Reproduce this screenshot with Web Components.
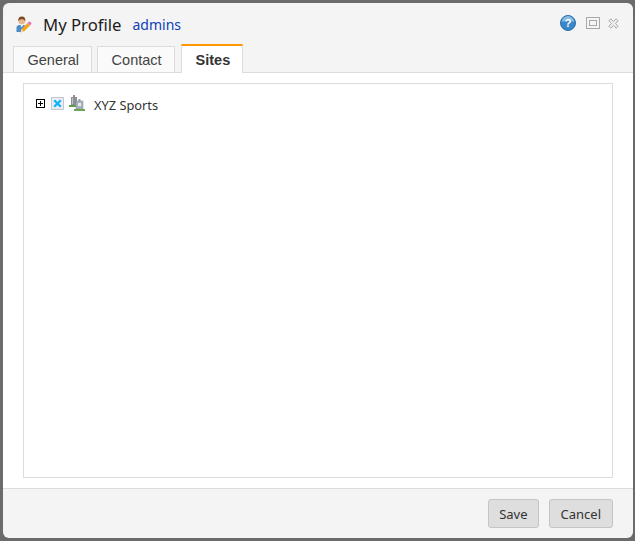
<!DOCTYPE html>
<html>
<head>
<meta charset="utf-8">
<title>My Profile</title>
<style>
  html, body { margin: 0; height: 100%; }
  body { background: #6b6b6b; overflow: hidden; font-family: "Noto Sans", "Open Sans", sans-serif; }
</style>
</head>
<body>
<profile-dialog>
  <span slot="title">My Profile</span>
  <span slot="user">admins</span>
  <tab-button>General</tab-button>
  <tab-button>Contact</tab-button>
  <tab-button active>Sites</tab-button>
  <site-tree slot="body" label="XYZ Sports"></site-tree>
  <dialog-button slot="footer">Save</dialog-button>
  <dialog-button slot="footer">Cancel</dialog-button>
</profile-dialog>

<script>
class ProfileDialog extends HTMLElement {
  constructor() {
    super();
    this.attachShadow({ mode: "open" });
  }

  connectedCallback() {
    this.shadowRoot.innerHTML = `
      <style>
        :host {
          display: flex;
          flex-direction: column;
          box-sizing: border-box;
          width: 630px;
          height: 535px;
          margin: 3px 0 0 3px;
          background: #f4f4f4;
          border-radius: 6px;
          overflow: hidden;
          color: #222;
        }

        #header {
          height: 70px;
          box-sizing: border-box;
          flex: none;
          position: relative;
          border-bottom: 1px solid #dcdcdc;
        }

        #title {
          display: flex;
          align-items: center;
          height: 43px;
          padding-left: 13px;
        }

        #title svg { flex: none; margin-right: 11px; }

        #name { font-size: 16.700px; color: #1c1c1c; }
        #user { font-size: 14px; color: #0c3fb8; margin-left: 11px; }

        #tools {
          position: absolute;
          top: 12px;
          right: 14px;
          display: flex;
          align-items: center;
        }

        #tools svg:nth-child(2) { margin: 0 8px 0 10px; }

        #tabs {
          display: flex;
          gap: 5px;
          padding-left: 10px;
        }

        #main {
          flex: 1;
          background: #fff;
          padding: 10px 20px 10px 20px;
          display: flex;
          min-height: 0;
        }

        #panel {
          flex: 1;
          border: 1px solid #dcdcdc;
          background: #fff;
        }

        #footer {
          flex: none;
          height: 50px;
          box-sizing: border-box;
          border-top: 1px solid #dcdcdc;
          display: flex;
          justify-content: flex-end;
          align-items: flex-start;
          gap: 10px;
          padding: 10px 20px 0 0;
        }
      </style>

      <div id="header">
        <div id="title">
          <svg width="16" height="17" viewBox="0 0 16 17">
            <path d="M0.500 16 V11.500 Q0.500 9.500 3.500 9 H8 Q9.500 9.500 10.500 10.500 L6 16 Z" fill="#4a8cc8"/>
            <path d="M4.500 9 L5.800 11.500 L7 9 Z" fill="#fff"/>
            <circle cx="5.800" cy="5" r="3.300" fill="#e9b68e"/>
            <path d="M2.300 5.500 Q1.800 0.500 5.800 0.500 Q9.800 0.500 9.300 5.500 Q8.500 3 5.800 3.200 Q3.200 3 2.300 5.500 Z" fill="#7a4a22"/>
            <path d="M4.500 16.500 L5.500 13 L11.500 7 L14 9.500 L8 15.500 Z" fill="#f0a71f"/>
            <path d="M11.500 7 L12.800 5.700 Q13.500 5.200 14.800 6.300 Q15.800 7.300 15.300 8 L14 9.500 Z" fill="#e672b4"/>
            <path d="M4.500 16.500 L5.500 13 L8 15.500 Z" fill="#f3d9b5"/>
          </svg>
          <span id="name"><slot name="title"></slot></span>
          <span id="user"><slot name="user"></slot></span>
        </div>
        <div id="tools">
          <svg width="16" height="16" viewBox="0 0 16 16">
            <circle cx="8" cy="8" r="7.500" fill="#3a86c6" stroke="#2a70ad" stroke-width="1"/>
            <path d="M2 7 A6 6 0 0 1 14 7 Q8 4.500 2 7 Z" fill="#8abde3"/>
            <text x="8" y="12" text-anchor="middle" font-family="Liberation Sans" font-weight="700" font-size="11" fill="#fff">?</text>
          </svg>
          <svg width="14" height="12" viewBox="0 0 14 12">
            <rect x="0.500" y="0.500" width="13" height="11" fill="#f4f4f4" stroke="#a8a8a8"/>
            <rect x="3.500" y="3.500" width="7" height="5" fill="#f4f4f4" stroke="#a8a8a8"/>
          </svg>
          <svg width="11" height="11" viewBox="0 0 11 11">
            <path d="M0.800 2.800 L2.800 0.800 L5.500 3.500 L8.200 0.800 L10.200 2.800 L7.500 5.500 L10.200 8.200 L8.200 10.200 L5.500 7.500 L2.800 10.200 L0.800 8.200 L3.500 5.500 Z" fill="#ececec" stroke="#a8a8a8" stroke-width="1"/>
          </svg>
        </div>
        <div id="tabs"><slot></slot></div>
      </div>

      <div id="main">
        <div id="panel"><slot name="body"></slot></div>
      </div>

      <div id="footer"><slot name="footer"></slot></div>
    `;
  }
}

class TabButton extends HTMLElement {
  constructor() {
    super();
    this.attachShadow({ mode: "open" });
  }

  connectedCallback() {
    this.shadowRoot.innerHTML = `
      <style>
        :host {
          display: block;
          box-sizing: border-box;
          height: 26px;
          padding: 0 12px 0 13.500px;
          border: 1px solid #dcdcdc;
          border-bottom: none;
          background: #fafafa;
          font: 14.500px/27px "Liberation Sans", Arial, sans-serif;
          color: #444;
        }

        :host([active]) {
          height: 29px;
          margin: -2px 0 -1px 1px;
          padding: 0 12px 0 14px;
          border-top: 2px solid #f90;
          background: #fff;
          font-weight: 700;
          line-height: 28px;
          color: #333;
        }
      </style>
      <slot></slot>
    `;
  }
}

class SiteTree extends HTMLElement {
  constructor() {
    super();
    this.attachShadow({ mode: "open" });
  }

  connectedCallback() {
    this.shadowRoot.innerHTML = `
      <style>
        :host {
          display: flex;
          align-items: center;
          height: 20px;
          margin: 10px 0 0 12px;
          font-size: 12.800px;
          color: #333;
        }

        svg { flex: none; }
        #expand { margin-top: -1px; }
        #check { margin: -2px 0 0 6px; }
        #site { margin: -2px 0 0 5px; }
        #label { margin: 2px 0 0 9px; }
      </style>
      <svg id="expand" width="9" height="9" viewBox="0 0 9 9">
        <rect x="0.500" y="0.500" width="8" height="8" fill="#fff" stroke="#000"/>
        <path d="M2 4.500 H7 M4.500 2 V7" stroke="#000"/>
      </svg>
      <svg id="check" width="13" height="13" viewBox="0 0 13 13">
        <rect x="0.500" y="0.500" width="12" height="12" fill="#e8eef4" stroke="#c4c8cc"/>
        <path d="M3.200 3.200 L9.800 9.800 M9.800 3.200 L3.200 9.800" stroke="#0fb2f5" stroke-width="2.300"/>
      </svg>
      <svg id="site" width="16" height="16" viewBox="0 0 16 16">
        <rect x="2" y="2" width="6" height="9" fill="#8d9095"/>
        <rect x="3" y="3" width="1" height="6" fill="#c2c5c9"/>
        <rect x="4" y="0" width="2" height="2" fill="#b8807c"/>
        <rect x="0" y="10" width="7" height="2" fill="#5f9a50"/>
        <rect x="7" y="6" width="7" height="8" fill="#aab3bb" stroke="#7f8a93" stroke-width="0.500"/>
        <rect x="9" y="8" width="3" height="3" fill="#e4eaef"/>
        <rect x="9.500" y="4" width="2" height="2" fill="#8e9aa4"/>
        <rect x="5" y="14" width="11" height="2" fill="#6aa65a"/>
      </svg>
      <span id="label">${this.getAttribute("label")}</span>
    `;
  }
}

class DialogButton extends HTMLElement {
  constructor() {
    super();
    this.attachShadow({ mode: "open" });
  }

  connectedCallback() {
    this.shadowRoot.innerHTML = `
      <style>
        :host {
          display: block;
          box-sizing: border-box;
          height: 29px;
          padding: 0 10px;
          background: #dedede;
          border: 1px solid #c4c4c4;
          border-radius: 3px;
          font-size: 13px;
          line-height: 28px;
          color: #333;
        }

        :host(:last-child) { padding: 0 11px; }
      </style>
      <slot></slot>
    `;
  }
}

customElements.define("profile-dialog", ProfileDialog);
customElements.define("tab-button", TabButton);
customElements.define("site-tree", SiteTree);
customElements.define("dialog-button", DialogButton);
</script>
</body>
</html>
